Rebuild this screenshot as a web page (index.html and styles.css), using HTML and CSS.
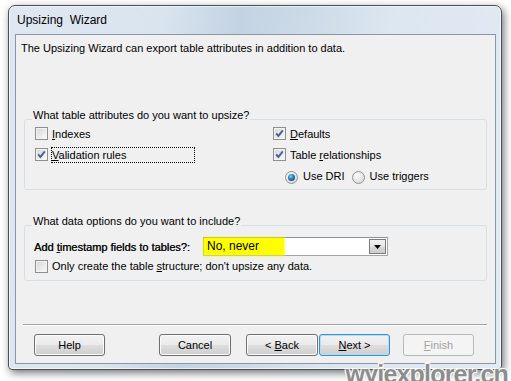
FILE: index.html
```html
<!DOCTYPE html>
<html lang="en">
<head>
    <meta charset="UTF-8">
    <title>Upsizing Wizard</title>
    <link rel="stylesheet" href="styles.css">
</head>
<body>
    <div class="window">
        <div class="titlebar">Upsizing&nbsp; Wizard</div>
        <div class="client">
            <p class="intro">The Upsizing Wizard can export table attributes in addition to data.</p>

            <fieldset class="group group-attrs">
                <legend>What table attributes do you want to upsize?</legend>
                <div class="attr-grid">
                    <label class="check">
                        <span class="box"></span>
                        <span class="text"><u>I</u>ndexes</span>
                    </label>
                    <label class="check">
                        <span class="box"><svg viewBox="0 0 11 11"><path d="M2.2 5.4 L4.4 7.9 L8.8 2.4"/></svg></span>
                        <span class="text"><u>D</u>efaults</span>
                    </label>
                    <label class="check">
                        <span class="box"><svg viewBox="0 0 11 11"><path d="M2.2 5.4 L4.4 7.9 L8.8 2.4"/></svg></span>
                        <span class="text focus"><u>V</u>alidation rules</span>
                    </label>
                    <label class="check">
                        <span class="box"><svg viewBox="0 0 11 11"><path d="M2.2 5.4 L4.4 7.9 L8.8 2.4"/></svg></span>
                        <span class="text">Table <u>r</u>elationships</span>
                    </label>
                    <div class="radios">
                        <label class="radio-item">
                            <span class="radio on"><span class="dot"></span></span>
                            <span class="text">Use DRI</span>
                        </label>
                        <label class="radio-item">
                            <span class="radio"></span>
                            <span class="text">Use triggers</span>
                        </label>
                    </div>
                </div>
            </fieldset>

            <fieldset class="group group-data">
                <legend>What data options do you want to include?</legend>
                <div class="stamp-row">
                    <span class="stamp-label">Add <u>t</u>imestamp fields to tables?:</span>
                    <div class="combo">
                        <span class="combo-value"><span class="marker">No, never</span></span>
                        <span class="combo-btn"><svg viewBox="0 0 7 4"><path d="M0 0 H7 L3.5 4 Z"/></svg></span>
                    </div>
                </div>
                <label class="check">
                    <span class="box"></span>
                    <span class="text">Only create the table <u>s</u>tructure; don't upsize any data.</span>
                </label>
            </fieldset>

            <div class="separator"></div>

            <div class="buttons">
                <button class="btn">Help</button>
                <button class="btn btn-cancel">Cancel</button>
                <button class="btn btn-back">&lt; <u>B</u>ack</button>
                <button class="btn btn-next"><u>N</u>ext &gt;</button>
                <button class="btn btn-finish" disabled><u>F</u>inish</button>
            </div>
        </div>
    </div>
    <div class="watermark">wyjexplorer.cn</div>
</body>
</html>
```

FILE: styles.css
```css
body {
    margin: 0;
    height: 381px;
    overflow: hidden;
    background-color: #fff;
    font-family: "Liberation Sans", Arial, sans-serif;
    font-size: 11px;
    color: #000;
    position: relative;
}
.window {
    box-sizing: border-box;
    width: 494px;
    height: 365px;
    margin: 5px 0 0 8px;
    padding: 0 5px 5px 6px;
    border: 1px solid #4a4f55;
    border-radius: 7px 7px 4px 4px;
    background: linear-gradient(100deg, #dfe8f2 0%, #d9e4ef 28%, #c3d3e3 42%, #cddbe8 55%, #dde7f1 70%, #e2eaf3 100%);
    box-shadow: 2px 3px 9px rgba(0, 0, 0, 0.55), inset 0 0 0 1px rgba(255, 255, 255, 0.6);
}
.titlebar {
    height: 28px;
    line-height: 28px;
    padding-left: 2px;
    font-size: 12px;
    color: #000;
}
.client {
    box-sizing: border-box;
    height: 330px;
    border: 1px solid #8a96a3;
    background-color: #f0f0f0;
}
.intro {
    margin: 0;
    padding: 5px 0 0 5px;
    line-height: 16px;
}
.group {
    box-sizing: border-box;
    width: 463px;
    margin: 0 0 0 8px;
    padding: 0 10px 3px 10px;
    border: 1px solid #d5dfe5;
    border-radius: 3px;
}
.group legend {
    margin-left: -3px;
    padding: 0 1px 8px;
    line-height: 16px;
}
.group-attrs {
    margin-top: 51px;
}
.group-data {
    margin-top: 23px;
    padding-bottom: 4px;
}
.attr-grid {
    display: grid;
    grid-template-columns: 238px 1fr;
    grid-auto-rows: 21px;
    margin-top: -8px;
}
.radios {
    grid-column: 2;
    display: flex;
    align-items: center;
    padding-left: 12px;
}
.check, .radio-item {
    display: flex;
    align-items: center;
    line-height: 16px;
}
.group-data .check {
    height: 20px;
}
.box {
    box-sizing: border-box;
    width: 13px;
    height: 13px;
    margin-right: 3px;
    border: 1px solid #8e8f8f;
    background: linear-gradient(135deg, #d6d6d6 0%, #e8e8e8 50%, #fbfbfb 100%);
    box-shadow: inset 0 0 0 1px #f4f4f4;
}
.box svg {
    display: block;
    width: 11px;
    height: 11px;
}
.box path {
    fill: none;
    stroke: #4d5f9b;
    stroke-width: 1.9;
}
.text {
    padding: 0 1px;
    white-space: nowrap;
}
.focus {
    box-sizing: border-box;
    width: 144px;
    outline: 1px dotted #000;
    outline-offset: -1px;
}
.radio {
    box-sizing: border-box;
    width: 13px;
    height: 13px;
    margin-top: 4px;
    margin-right: 4px;
    border: 1px solid #939393;
    border-radius: 50%;
    background: radial-gradient(circle at 40% 35%, #fdfdfd 0%, #e2e2e2 60%, #cfcfcf 100%);
    display: flex;
    align-items: center;
    justify-content: center;
}
.radio .dot {
    width: 7px;
    height: 7px;
    border-radius: 50%;
    background: radial-gradient(circle at 40% 35%, #8fd6f7 0%, #1f7ab6 45%, #0c406c 100%);
}
.radio-item + .radio-item {
    margin-left: 6px;
}
.stamp-row {
    display: grid;
    grid-template-columns: 168px 185px;
    height: 19px;
    align-items: center;
}
.stamp-label {
    margin-left: -1px;
    white-space: nowrap;
    color: #111;
    text-shadow: 0.3px 0 0 #111;
}
.combo {
    box-sizing: border-box;
    height: 19px;
    display: flex;
    align-items: center;
    border: 1px solid #a3a7ad;
    border-top-color: #8b9097;
    background-color: #fff;
}
.combo-value {
    flex: 1;
    height: 100%;
}
.marker {
    display: inline-block;
    width: 77px;
    height: 100%;
    padding-left: 3px;
    line-height: 17px;
    font-size: 12px;
    background-color: #ffff00;
    box-shadow: 0 0 2px 1px rgba(255, 255, 0, 0.7);
}
.combo-btn {
    box-sizing: border-box;
    width: 17px;
    height: 15px;
    margin-right: 1px;
    border: 1px solid #7c7c7c;
    background: linear-gradient(#f2f2f2, #e5e5e5 50%, #d6d6d6 51%, #cdcdcd);
    display: flex;
    align-items: center;
    justify-content: center;
}
.combo-btn svg {
    width: 7px;
    height: 4px;
    margin-top: 1px;
}
.separator {
    width: 464px;
    margin: 43px 0 0 7px;
    border-top: 1px solid #a0a0a0;
    border-bottom: 1px solid #fff;
}
.buttons {
    display: flex;
    margin-top: 8px;
    padding-left: 18px;
}
.btn {
    box-sizing: border-box;
    width: 71px;
    height: 22px;
    padding: 0;
    border: 1px solid #707070;
    border-radius: 3px;
    background: linear-gradient(#f2f2f2 0%, #ebebeb 50%, #dddddd 51%, #cfcfcf 100%);
    box-shadow: inset 0 0 0 1px #fbfbfb;
    font-family: inherit;
    font-size: 11px;
    color: #000;
}
.btn-cancel {
    width: 72px;
    margin-left: 54px;
}
.btn-back {
    width: 72px;
    margin-left: 15px;
}
.btn-next {
    margin-left: 1px;
    border-color: #3c8fd0;
    box-shadow: inset 0 0 0 1px #a9e1fb;
}
.btn-finish {
    margin-left: 13px;
    border-color: #b5b9bc;
    background: #f4f4f4;
    box-shadow: none;
    color: #a3a3a3;
}
.watermark {
    position: absolute;
    right: 3px;
    bottom: -8px;
    font-family: "Liberation Sans", Arial, sans-serif;
    font-weight: bold;
    font-size: 25px;
    letter-spacing: -0.8px;
    color: #8d8d8d;
    text-shadow: 1px 1px 0 #fff, -1px -1px 0 #fff, 1px -1px 0 #eee, -1px 1px 0 #eee;
}
```
